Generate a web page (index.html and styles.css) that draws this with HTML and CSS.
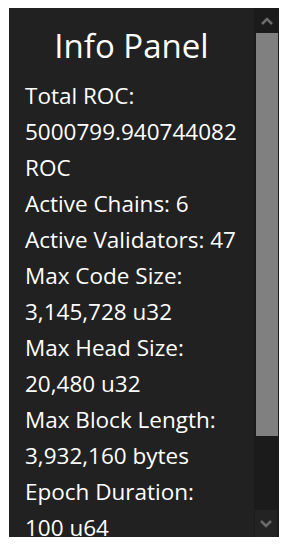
FILE: index.html
```html
<!DOCTYPE html>
<html>
<head>
<link rel="stylesheet" href="styles.css">
</head>
<body>
<div id="infoPanel">
  <div id="panelContent">
    <h1 class="title">Info Panel</h1>
    <p class="stat">Total ROC: <span class="value">5000799.940744082 ROC</span></p>
    <p class="stat">Active Chains: <span class="value">6</span></p>
    <p class="stat">Active Validators: <span class="value">47</span></p>
    <p class="stat">Max Code Size: <span class="value">3,145,728 u32</span></p>
    <p class="stat">Max Head Size: <span class="value">20,480 u32</span></p>
    <p class="stat">Max Block Length: <span class="value">3,932,160 bytes</span></p>
    <p class="stat">Epoch Duration: <span class="value">100 u64</span></p>
  </div>
  <div id="scrollBar">
    <div class="scrollButton">
      <svg width="12" height="8" viewBox="0 0 12 8"><path d="M1 7 L6 2 L11 7" fill="none" stroke="#6b6b6b" stroke-width="2.5"/></svg>
    </div>
    <div class="scrollTrack">
      <div class="scrollThumb"></div>
    </div>
    <div class="scrollButton down">
      <svg width="12" height="8" viewBox="0 0 12 8"><path d="M1 1 L6 6 L11 1" fill="none" stroke="#6b6b6b" stroke-width="2.5"/></svg>
    </div>
  </div>
</div>
</body>
</html>
```

FILE: styles.css
```css
html, body {
  margin: 0;
  padding: 0;
  background-color: white;
}

body {
  padding: 8px 8px 8px 9px;
}

#infoPanel {
  width: 270px;
  height: 529px;
  display: flex;
  background-color: #212121;
  color: white;
  font-family: "Open Sans", "Noto Sans", sans-serif;
}

#panelContent {
  flex: 1;
  overflow: hidden;
  padding: 0 16px;
}

.title {
  margin: 13px 0 7px 0;
  text-align: center;
  font-size: 33px;
  font-weight: normal;
  line-height: 50px;
}

.stat {
  margin: 0;
  font-size: 22.5px;
  line-height: 36px;
}

.value {
  display: inline-block;
}

#scrollBar {
  width: 25px;
  display: flex;
  flex-direction: column;
  background-color: #1b1b1b;
}

.scrollButton {
  height: 25px;
  display: flex;
  align-items: center;
  justify-content: center;
}

.scrollButton.down {
  height: 27px;
  margin: 0 2px 0 1px;
  background-color: #232323;
}

.scrollTrack {
  flex: 1;
  padding: 0 1px 0 2px;
}

.scrollThumb {
  height: 403px;
  background-color: #808080;
}
```
